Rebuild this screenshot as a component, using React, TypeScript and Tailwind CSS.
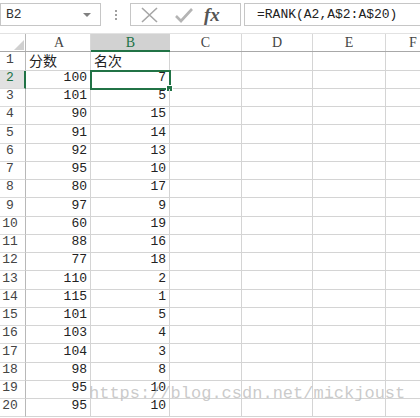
import React from "react";

const A = [100, 101, 90, 91, 92, 95, 80, 97, 60, 88, 77, 110, 115, 101, 103, 104, 98, 95, 95];
const B = [7, 5, 15, 14, 13, 10, 17, 9, 19, 16, 18, 2, 1, 5, 4, 3, 8, 10, 10];

const mono = { fontFamily: '"Liberation Mono", "Noto Sans CJK SC", monospace' };

export default function App() {
  const rows = Array.from({ length: 20 }, (_, i) => i + 1);
  return (
    <div className="relative w-[420px] h-[418px] overflow-hidden bg-white text-[#222]" style={mono}>
      {/* toolbar */}
      <div className="flex h-[34px] items-start pt-[3px] border-b border-[#e2e2e2]">
        <div className="relative flex h-[23px] w-[101px] shrink-0 items-center border border-[#c6c6c6] pl-[5px] text-[13px] text-[#333]">
          B2
          <div className="absolute right-[9px] top-[9px] h-0 w-0 border-x-[4px] border-t-[4px] border-x-transparent border-t-[#808080]" />
        </div>
        <div className="flex h-[23px] w-[29px] shrink-0 flex-col items-center justify-center gap-[2px]">
          <div className="h-[2px] w-[2px] bg-[#a0a0a0]" />
          <div className="h-[2px] w-[2px] bg-[#a0a0a0]" />
          <div className="h-[2px] w-[2px] bg-[#a0a0a0]" />
        </div>
        <div className="flex h-[23px] w-[111px] shrink-0 items-center border border-[#c6c6c6]">
          <svg width="22" height="18" viewBox="0 0 22 18" className="ml-[8px]">
            <path d="M3 2 L18 16 M18 2 L3 16" stroke="#a6a6a6" strokeWidth="1.6" fill="none" />
          </svg>
          <svg width="22" height="18" viewBox="0 0 22 18" className="ml-[12px]">
            <path d="M3 10 L8 15 L19 3" stroke="#b4b4b4" strokeWidth="2.6" fill="none" />
          </svg>
          <span
            className="ml-[9px] text-[19px] italic font-bold text-[#555] leading-none"
            style={{ fontFamily: '"Liberation Serif", serif' }}
          >
            fx
          </span>
        </div>
        <div className="ml-[3px] flex h-[23px] flex-1 items-center border border-r-0 border-[#c6c6c6] pl-[12px] text-[13px] text-[#222]">
          =RANK(A2,A$2:A$20)
        </div>
      </div>

      {/* column header */}
      <div className="flex h-[18px] border-b border-[#a8a8a8] text-[14px] text-[#444]" style={{ fontFamily: '"Liberation Serif", serif' }}>
        <div className="relative w-[26px] shrink-0 border-r border-[#b8b8b8]">
          <svg width="10" height="10" viewBox="0 0 10 10" className="absolute left-[14px] top-[6px]">
            <path d="M10 0 L10 10 L0 10 Z" fill="#d0d0d0" />
          </svg>
        </div>
        <div className="flex w-[65px] shrink-0 items-center justify-center border-r border-[#d8d8d8] pl-[2px]">A</div>
        <div className="flex w-[79px] shrink-0 items-center justify-center border-b-2 border-[#217346] bg-[#d2d2d2] text-[#217346] -mb-[1px]">B</div>
        <div className="flex w-[72px] shrink-0 items-center justify-center border-r border-[#d8d8d8]">C</div>
        <div className="flex w-[71px] shrink-0 items-center justify-center border-r border-[#d8d8d8]">D</div>
        <div className="flex w-[73px] shrink-0 items-center justify-center border-r border-[#d8d8d8]">E</div>
        <div className="flex w-[54px] shrink-0 items-center justify-center">F</div>
      </div>

      {/* rows */}
      {rows.map((r, i) => {
        const h = i % 4 === 0 ? "h-[19px]" : "h-[18px]";
        const sel = r === 2;
        return (
          <div key={r} className={`flex ${h} text-[13px]`}>
            <div
              className={`flex w-[26px] shrink-0 items-end pb-[1px] border-b border-[#dadada] ${
                sel ? "bg-[#e1e1e1] text-[#217346] border-r-2 border-r-[#217346]" : "border-r border-r-[#b8b8b8] text-[#444]"
              }`}
            >
              <span className="w-[20px] text-center">{r}</span>
            </div>
            <div className="flex w-[65px] shrink-0 items-end justify-end border-b border-r border-[#d4d4d4] pr-[3px] pb-[1px]">
              {r === 1 ? (
                <span className="mr-auto pl-[3px] text-[14px] leading-[17px]" style={{ fontFamily: '"Noto Sans CJK SC", sans-serif' }}>
                  分数
                </span>
              ) : (
                A[r - 2]
              )}
            </div>
            <div className="relative flex w-[79px] shrink-0 items-end justify-end border-b border-r border-[#d4d4d4] pr-[3px] pb-[1px]">
              {r === 1 ? (
                <span className="mr-auto pl-[3px] text-[14px] leading-[17px]" style={{ fontFamily: '"Noto Sans CJK SC", sans-serif' }}>
                  名次
                </span>
              ) : (
                B[r - 2]
              )}
              {sel && (
                <>
                  <div className="absolute -left-[1px] -top-[1px] h-[20px] w-[81px] border-2 border-[#217346]" />
                  <div className="absolute -right-[4px] -bottom-[4px] h-[7px] w-[7px] border border-white bg-[#217346]" />
                </>
              )}
            </div>
            <div className="w-[72px] shrink-0 border-b border-r border-[#d4d4d4]" />
            <div className="w-[71px] shrink-0 border-b border-r border-[#d4d4d4]" />
            <div className="w-[73px] shrink-0 border-b border-r border-[#d4d4d4]" />
            <div className="w-[54px] shrink-0 border-b border-[#d4d4d4]" />
          </div>
        );
      })}

      {/* watermark */}
      <div
        className="pointer-events-none absolute left-[89px] top-[384px] text-[17px] leading-[20px] text-[#bdbdbd]/80"
        style={{ fontFamily: '"Liberation Mono", monospace' }}
      >
        https://blog.csdn.net/mickjoust
      </div>
    </div>
  );
}
